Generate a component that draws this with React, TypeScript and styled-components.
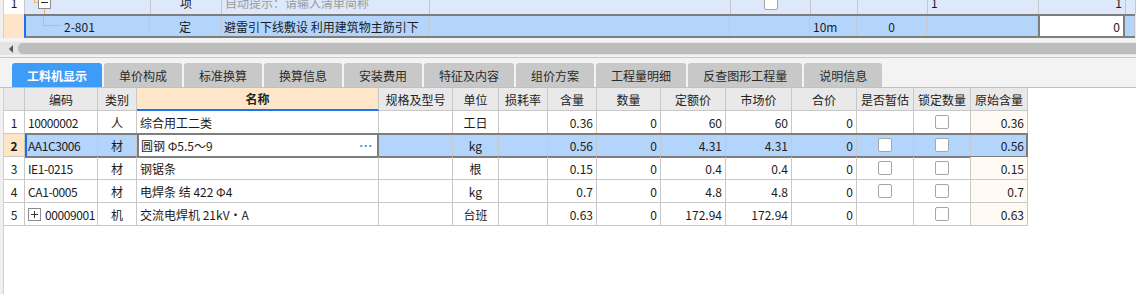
import styled, { createGlobalStyle, css } from "styled-components";

const GlobalStyle = createGlobalStyle`
  html, body {
    margin: 0;
    padding: 0;
    background: #ffffff;
  }
  body {
    font-family: "Noto Sans CJK SC", "Liberation Sans", sans-serif;
    font-size: 12px;
    color: #1b1b1b;
  }
`;

const topCols = "21px 126px 71px 208px 301px 80px 47px 70px 111px 87px 10px";
const bodyCols = "73px 39px 242px 74px 46px 49px 49px 64px 65px 66px 65px 57px 57px 57px";

type Mat = {
  n: number;
  code: string;
  expand?: boolean;
  type: string;
  name: string;
  unit: string;
  qty: string;
  num: string;
  price: string;
  market: string;
  total: string;
  est: boolean;
  orig: string;
  selected?: boolean;
};

const rows: Mat[] = [
  { n: 1, code: "10000002", type: "人", name: "综合用工二类", unit: "工日", qty: "0.36", num: "0", price: "60", market: "60", total: "0", est: false, orig: "0.36" },
  { n: 2, code: "AA1C3006", type: "材", name: "圆钢 Φ5.5～9", unit: "kg", qty: "0.56", num: "0", price: "4.31", market: "4.31", total: "0", est: true, orig: "0.56", selected: true },
  { n: 3, code: "IE1-0215", type: "材", name: "钢锯条", unit: "根", qty: "0.15", num: "0", price: "0.4", market: "0.4", total: "0", est: true, orig: "0.15" },
  { n: 4, code: "CA1-0005", type: "材", name: "电焊条 结 422 Φ4", unit: "kg", qty: "0.7", num: "0", price: "4.8", market: "4.8", total: "0", est: true, orig: "0.7" },
  { n: 5, code: "00009001", expand: true, type: "机", name: "交流电焊机 21kV・A", unit: "台班", qty: "0.63", num: "0", price: "172.94", market: "172.94", total: "0", est: false, orig: "0.63" },
];

const tabs = ["工料机显示", "单价构成", "标准换算", "换算信息", "安装费用", "特征及内容", "组价方案", "工程量明细", "反查图形工程量", "说明信息"];

const headers = ["编码", "类别", "名称", "规格及型号", "单位", "损耗率", "含量", "数量", "定额价", "市场价", "合价", "是否暂估", "锁定数量", "原始含量"];

const TreeOpen = () => (
  <svg width="60" height="23" viewBox="0 0 60 23">
    <path d="M9.5 0 V11.5 H13" stroke="#f6b24e" fill="none" />
    <path d="M19.5 17.5 V23" stroke="#f6b24e" fill="none" />
    <rect x="13.5" y="5.5" width="12" height="12" fill="#fff" stroke="#8c8c8c" />
    <path d="M16 11.5 H23" stroke="#333" />
  </svg>
);

const TreeLeaf = () => (
  <svg width="40" height="22" viewBox="0 0 40 22">
    <path d="M19.5 0 V10.5 H37" stroke="#f6b24e" fill="none" />
  </svg>
);

const PlusBox = () => (
  <svg width="13" height="13" viewBox="0 0 13 13">
    <rect x="0.5" y="0.5" width="12" height="12" fill="#fff" stroke="#8c8c8c" />
    <path d="M3 6.5 H10 M6.5 3 V10" stroke="#333" />
  </svg>
);

const App = () => {
  return (
    <Page>
      <GlobalStyle />
      <TopGrid>
        <TopLine>
          <Gutter />
          <TopRow>
            <TopCell $bg="#ffffff" $align="center">1</TopCell>
            <TopCell $pad="0"><TreeOpen /></TopCell>
            <TopCell $align="center">项</TopCell>
            <TopCell $muted>自动提示：请输入清单简称</TopCell>
            <TopCell />
            <TopCell $align="center"><Check /></TopCell>
            <TopCell />
            <TopCell />
            <TopCell>1</TopCell>
            <TopCell $align="right">1</TopCell>
            <TopCell />
          </TopRow>
        </TopLine>
        <TopLine>
          <Gutter />
          <TopNum />
          <TopSelected>
            <TopCell $pad="0">
              <TreeLeaf />
              <span>2-801</span>
            </TopCell>
            <TopCell $align="center">定</TopCell>
            <TopCell>避雷引下线敷设 利用建筑物主筋引下</TopCell>
            <TopCell />
            <TopCell />
            <TopCell>10m</TopCell>
            <TopCell $align="center">0</TopCell>
            <TopCell />
            <EditCell $align="right">0</EditCell>
            <TopCell />
          </TopSelected>
        </TopLine>
      </TopGrid>

      <ScrollArea>
        <ScrollTrack>
          <ScrollArrow />
          <ScrollThumb />
        </ScrollTrack>
      </ScrollArea>

      <TabBar>
        {tabs.map((t, i) => (
          <Tab key={t} $active={i === 0}>{t}</Tab>
        ))}
      </TabBar>

      <Lower>
        <Gutter />
        <Table>
          <Line>
            <HeadNum />
            <HeadBody>
              {headers.map((h) => (
                <HeadCell key={h} $key={h === "名称"}>{h}</HeadCell>
              ))}
            </HeadBody>
          </Line>
          {rows.map((r) => (
            <Line key={r.n}>
              <RowNum $selected={r.selected}>{r.n}</RowNum>
              <RowBody $selected={r.selected}>
                <CodeCell>
                  {r.expand && <PlusBox />}
                  {r.code}
                </CodeCell>
                <Cell $align="center">{r.type}</Cell>
                {r.selected ? (
                  <NameEdit>
                    <span>{r.name}</span>
                    <Dots>···</Dots>
                  </NameEdit>
                ) : (
                  <Cell>{r.name}</Cell>
                )}
                <Cell />
                <Cell $align="center">{r.unit}</Cell>
                <Cell />
                <Cell $align="right">{r.qty}</Cell>
                <Cell $align="right">{r.num}</Cell>
                <Cell $align="right">{r.price}</Cell>
                <Cell $align="right">{r.market}</Cell>
                <Cell $align="right">{r.total}</Cell>
                <Cell $align="center">{r.est && <Check />}</Cell>
                <Cell $align="center"><Check /></Cell>
                <Cell $align="right" $orig={!r.selected}>{r.orig}</Cell>
              </RowBody>
            </Line>
          ))}
        </Table>
      </Lower>
    </Page>
  );
};

export default App;

const Page = styled.div`
  width: 1136px;
  height: 294px;
  overflow: hidden;
  display: flex;
  flex-direction: column;
  background: #ffffff;
`;

const Gutter = styled.div`
  flex: 0 0 3px;
  background: #efefef;
  border-right: 1px solid #d2d2d2;
`;

const TopGrid = styled.div`
  height: 38px;
  flex: 0 0 38px;
  overflow: hidden;
  display: flex;
  flex-direction: column;
  justify-content: flex-end;
  background: #dde9fb;
`;

const TopLine = styled.div`
  display: flex;
  flex: 0 0 auto;
`;

const TopRow = styled.div`
  display: grid;
  grid-template-columns: ${topCols};
  height: 23px;
  background: #dde9fb;
`;

const TopNum = styled.div`
  width: 20px;
  height: 24px;
  background: #fee5c8;
`;

const TopSelected = styled.div`
  position: relative;
  display: grid;
  grid-template-columns: 126px 71px 208px 301px 80px 47px 70px 111px 87px 10px;
  height: 24px;
  background: #b4d5fb;

  &::after {
    content: "";
    position: absolute;
    inset: 0;
    border-top: 2px solid #7e7e7e;
    border-bottom: 2px solid #7e7e7e;
    border-left: 2px solid #1a6ff0;
    pointer-events: none;
  }
`;

const TopCell = styled.div<{ $align?: string; $bg?: string; $muted?: boolean; $pad?: string }>`
  box-sizing: border-box;
  display: flex;
  align-items: center;
  justify-content: ${(p) => (p.$align === "center" ? "center" : p.$align === "right" ? "flex-end" : "flex-start")};
  padding: ${(p) => p.$pad ?? "0 3px"};
  border-right: 1px solid #c4c8ce;
  background: ${(p) => p.$bg ?? "transparent"};
  color: ${(p) => (p.$muted ? "#9a9a9a" : "#1b1b1b")};
  white-space: nowrap;
  overflow: hidden;
  font-size: 12px;

  svg {
    flex: 0 0 auto;
  }
`;

const EditCell = styled(TopCell)`
  background: #ffffff;
  border-left: 2px solid #7e7e7e;
  border-right: 2px solid #7e7e7e;
`;

const ScrollArea = styled.div`
  flex: 0 0 20px;
  box-sizing: border-box;
  background: #f3f3f3;
  border-bottom: 1px solid #c6c6c6;
  padding: 4px 0 2px;
`;

const ScrollTrack = styled.div`
  height: 13px;
  background: #e4e4e4;
  display: flex;
  align-items: center;
`;

const ScrollArrow = styled.div`
  width: 0;
  height: 0;
  margin: 0 5px 0 9px;
  border-top: 4px solid transparent;
  border-bottom: 4px solid transparent;
  border-right: 4px solid #555555;
`;

const ScrollThumb = styled.div`
  flex: 1;
  height: 11px;
  background: #bdbdbd;
  border-radius: 5px 0 0 5px;
`;

const TabBar = styled.div`
  flex: 0 0 30px;
  box-sizing: border-box;
  height: 31px;
  display: flex;
  align-items: flex-end;
  gap: 2px;
  padding-left: 12px;
  background: #f3f3f3;
  border-bottom: 1px solid #c0c0c0;
`;

const Tab = styled.div<{ $active?: boolean }>`
  height: 24px;
  padding: 0 15px;
  display: flex;
  align-items: center;
  border-radius: 3px 3px 0 0;
  font-size: 12px;
  white-space: nowrap;
  background: #c8c8c8;
  color: #2a2a2a;

  ${(p) =>
    p.$active &&
    css`
      background: #3d9cf6;
      color: #ffffff;
      font-weight: bold;
    `}
`;

const Lower = styled.div`
  flex: 1;
  display: flex;
`;

const Table = styled.div`
  display: flex;
  flex-direction: column;
`;

const Line = styled.div`
  display: flex;
  height: 23px;
`;

const HeadNum = styled.div`
  box-sizing: border-box;
  width: 21px;
  background: #e9e9e9;
  border-right: 1px solid #c8c8c8;
  border-bottom: 1px solid #c8c8c8;
`;

const HeadBody = styled.div`
  display: grid;
  grid-template-columns: ${bodyCols};
`;

const HeadCell = styled.div<{ $key?: boolean }>`
  box-sizing: border-box;
  display: flex;
  align-items: center;
  justify-content: center;
  background: #e9e9e9;
  border-right: 1px solid #c8c8c8;
  border-bottom: 1px solid #c8c8c8;
  color: #222222;
  white-space: nowrap;

  ${(p) =>
    p.$key &&
    css`
      background: #fee6c9;
      font-weight: bold;
      border-bottom: 2px solid #1f73ef;
    `}
`;

const RowNum = styled.div<{ $selected?: boolean }>`
  box-sizing: border-box;
  width: 21px;
  display: flex;
  align-items: center;
  justify-content: center;
  border-right: 1px solid #c8c8c8;
  border-bottom: 1px solid #c8c8c8;
  background: ${(p) => (p.$selected ? "#fee5c8" : "#ffffff")};
  font-weight: ${(p) => (p.$selected ? "bold" : "normal")};
`;

const RowBody = styled.div<{ $selected?: boolean }>`
  position: relative;
  display: grid;
  grid-template-columns: ${bodyCols};

  ${(p) =>
    p.$selected &&
    css`
      background: #b4d5fb;

      &::after {
        content: "";
        position: absolute;
        inset: -1px 0 -1px 0;
        border: 2px solid #7e7e7e;
        border-left: 2px solid #1a6ff0;
        pointer-events: none;
      }
    `}
`;

const Cell = styled.div<{ $align?: string; $orig?: boolean }>`
  box-sizing: border-box;
  display: flex;
  align-items: center;
  justify-content: ${(p) => (p.$align === "center" ? "center" : p.$align === "right" ? "flex-end" : "flex-start")};
  padding: 0 3px;
  border-right: 1px solid #c8c8c8;
  border-bottom: 1px solid #c8c8c8;
  white-space: nowrap;
  overflow: hidden;
  background: ${(p) => (p.$orig ? "#fffaf4" : "transparent")};
`;

const CodeCell = styled(Cell)`
  gap: 4px;
  padding: 0 1px 0 3px;
  letter-spacing: -0.4px;

  svg {
    flex: 0 0 auto;
  }
`;

const NameEdit = styled.div`
  box-sizing: border-box;
  display: flex;
  align-items: center;
  justify-content: space-between;
  padding: 0 4px 0 2px;
  background: #ffffff;
  border-left: 2px solid #7e7e7e;
  border-right: 2px solid #7e7e7e;
  white-space: nowrap;
`;

const Dots = styled.span`
  font-family: "Liberation Sans", sans-serif;
  color: #3c88d8;
  font-weight: bold;
  font-size: 12px;
  letter-spacing: 0.5px;
`;

const Check = styled.span`
  display: inline-block;
  box-sizing: border-box;
  width: 14px;
  height: 14px;
  border: 1px solid #a6a6a6;
  border-radius: 2px;
  background: #ffffff;
`;
